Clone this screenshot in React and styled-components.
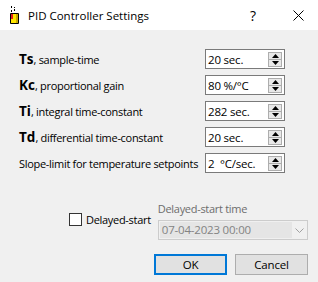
import React from "react";
import styled, { createGlobalStyle } from "styled-components";

const GlobalStyle = createGlobalStyle`
  html, body {
    margin: 0;
    padding: 0;
    background: #f0f0f0;
  }
  body {
    font-family: "Open Sans", "Noto Sans", sans-serif;
    font-size: 11px;
    color: #000;
  }
`;

const Dialog = styled.div`
  width: 318px;
  height: 282px;
  display: flex;
  flex-direction: column;
  background: #f0f0f0;
  overflow: hidden;
`;

const TitleBar = styled.div`
  height: 30px;
  background: #fff;
  display: flex;
  align-items: center;
  padding-left: 9px;
  flex-shrink: 0;
`;

const Title = styled.span`
  margin-left: 8px;
  font-size: 11.5px;
  flex: 1;
`;

const TitleButton = styled.span`
  width: ${(p) => p.w}px;
  height: 30px;
  display: flex;
  align-items: center;
  justify-content: center;
  font-size: 14px;
`;

const Body = styled.div`
  display: flex;
  flex-direction: column;
  padding: 19px 10px 0 19px;
  letter-spacing: -0.3px;
`;

const Fields = styled.div`
  display: flex;
  flex-direction: column;
  gap: 6px;
  padding-right: 23px;
`;

const Row = styled.div`
  display: flex;
  align-items: center;
  height: 20px;
`;

const Label = styled.span`
  flex: 1;
  white-space: nowrap;
`;

const Abbr = styled.b`
  font-size: 13.5px;
  font-weight: 700;
  letter-spacing: 0;
`;

const Spinner = styled.div`
  width: 80px;
  height: 20px;
  box-sizing: border-box;
  border: 1px solid #7a7a7a;
  background: #fff;
  display: flex;
  align-items: center;
  padding: 0 1px 0 2px;
`;

const SpinValue = styled.span`
  flex: 1;
  font-size: 11.5px;
  letter-spacing: -0.2px;
  white-space: pre;
`;

const SpinButtons = styled.div`
  width: 14px;
  height: 15px;
  display: flex;
  flex-direction: column;
  margin-right: 1px;
  border: 1px solid #adadad;
  box-sizing: border-box;
  background: #e8e8e8;
`;

const SpinHalf = styled.div`
  flex: 1;
  display: flex;
  align-items: center;
  justify-content: center;
  border-top: ${(p) => (p.bottom ? "1px solid #adadad" : "none")};
`;

const Delayed = styled.div`
  display: flex;
  align-items: flex-start;
  margin-top: 28px;
  padding-left: 50px;
`;

const CheckGroup = styled.label`
  display: flex;
  align-items: center;
  white-space: nowrap;
  margin-top: 11px;
  margin-right: 7px;
`;

const CheckBox = styled.span`
  width: 13px;
  height: 13px;
  box-sizing: border-box;
  border: 1px solid #333;
  background: #fff;
  margin-right: 4px;
`;

const DelayCol = styled.div`
  display: flex;
  flex-direction: column;
  gap: 3px;
`;

const GrayLabel = styled.span`
  color: #6d6d6d;
  line-height: 16px;
  white-space: nowrap;
`;

const Combo = styled.div`
  width: 150px;
  height: 20px;
  box-sizing: border-box;
  border: 1px solid #cccccc;
  background: #f0f0f0;
  display: flex;
  align-items: center;
  padding: 1px;
`;

const ComboValue = styled.span`
  flex: 1;
  height: 16px;
  background: #e5e5e5;
  color: #838383;
  font-size: 11.5px;
  letter-spacing: -0.2px;
  line-height: 16px;
  padding-left: 2px;
  margin-right: 1px;
`;

const Chevron = styled.span`
  width: 13px;
  display: flex;
  justify-content: center;
`;

const Buttons = styled.div`
  display: flex;
  justify-content: flex-end;
  gap: 8px;
  margin-top: 14px;
`;

const Button = styled.button`
  width: 73px;
  height: 21px;
  box-sizing: border-box;
  background: #e1e1e1;
  border: ${(p) => (p.primary ? "2px solid #0078d7" : "1px solid #adadad")};
  font-family: inherit;
  font-size: 11.5px;
  letter-spacing: -0.2px;
  color: #000;
  padding: 0;
`;

const Arrow = ({ down }) => (
  <svg width="7" height="4" viewBox="0 0 7 4">
    <path d={down ? "M0 0h7L3.5 4z" : "M0 4h7L3.5 0z"} fill="#000" />
  </svg>
);

const fields = [
  { abbr: "Ts", text: ", sample-time", value: "20 sec." },
  { abbr: "Kc", text: ", proportional gain", value: "80 %/\u00b0C" },
  { abbr: "Ti", text: ", integral time-constant", value: "282 sec." },
  { abbr: "Td", text: ", differential time-constant", value: "20 sec." },
  { abbr: "", text: "Slope-limit for temperature setpoints", value: "2  \u00b0C/sec." },
];

export default function App() {
  return (
    <Dialog>
      <GlobalStyle />
      <TitleBar>
        <svg width="11" height="18" viewBox="0 0 11 18">
          <rect x="2" y="0" width="1" height="2" fill="#000" />
          <rect x="5" y="1" width="1" height="1" fill="#000" />
          <rect x="2" y="4" width="1" height="2" fill="#000" />
          <rect x="5" y="3" width="1" height="2" fill="#000" />
          <path d="M1.5 7.5h8v10h-8z" fill="#ffe600" stroke="#000" />
          <rect x="2" y="8" width="2" height="5" fill="#e02020" />
          <rect x="7" y="8" width="2" height="9" fill="#c8a800" />
        </svg>
        <Title>PID Controller Settings</Title>
        <TitleButton w={50}>?</TitleButton>
        <TitleButton w={40}>
          <svg width="11" height="11" viewBox="0 0 11 11">
            <path d="M0.5 0.5l10 10M10.5 0.5l-10 10" stroke="#000" strokeWidth="1" />
          </svg>
        </TitleButton>
      </TitleBar>
      <Body>
        <Fields>
          {fields.map((f) => (
            <Row key={f.text}>
              <Label>
                {f.abbr && <Abbr>{f.abbr}</Abbr>}
                {f.text}
              </Label>
              <Spinner>
                <SpinValue>{f.value}</SpinValue>
                <SpinButtons>
                  <SpinHalf>
                    <Arrow />
                  </SpinHalf>
                  <SpinHalf bottom>
                    <Arrow down />
                  </SpinHalf>
                </SpinButtons>
              </Spinner>
            </Row>
          ))}
        </Fields>
        <Delayed>
          <CheckGroup>
            <CheckBox />
            Delayed-start
          </CheckGroup>
          <DelayCol>
            <GrayLabel>Delayed-start time</GrayLabel>
            <Combo>
              <ComboValue>07-04-2023 00:00</ComboValue>
              <Chevron>
                <svg width="9" height="5" viewBox="0 0 9 5">
                  <path d="M0.5 0.5l4 4 4-4" fill="none" stroke="#a0a0a0" />
                </svg>
              </Chevron>
            </Combo>
          </DelayCol>
        </Delayed>
        <Buttons>
          <Button primary>OK</Button>
          <Button>Cancel</Button>
        </Buttons>
      </Body>
    </Dialog>
  );
}
